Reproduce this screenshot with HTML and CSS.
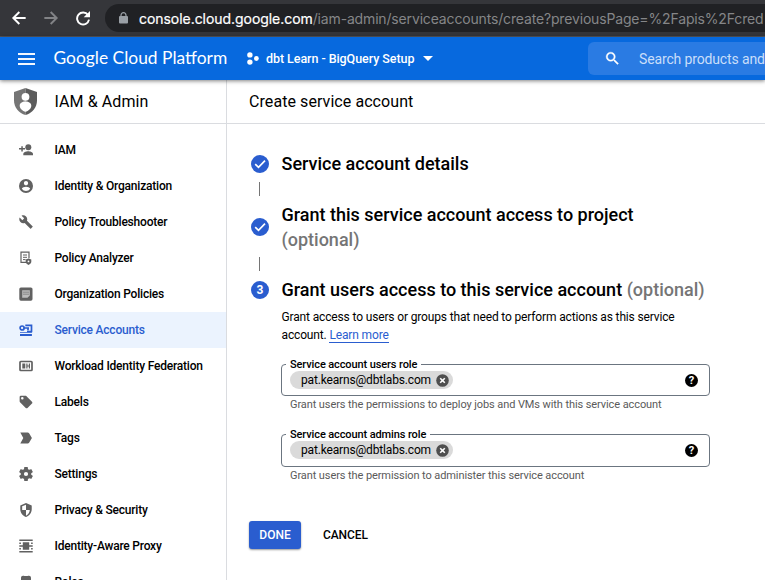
FILE: index.html
```html
<!DOCTYPE html>
<html lang="en">
<head>
<meta charset="utf-8">
<title>Create service account</title>
<link rel="stylesheet" href="styles.css">
</head>
<body>
<div class="browser">
  <svg class="nav-btn" viewBox="0 0 24 24"><path d="M22 12H4M12.500 3 3.500 12l9 9"/></svg>
  <svg class="nav-btn dim" viewBox="0 0 24 24"><path d="M2 12H20M11.500 3l9 9-9 9"/></svg>
  <svg class="nav-btn reload" viewBox="0 0 24 24"><path d="M19.500 7.500A9 9 0 1 0 21 14.500"/><path class="solid" d="M22.500 1.500v9.500H13z"/></svg>
  <div class="omnibox">
    <svg class="lock" viewBox="0 0 9 12"><rect x="0" y="4" width="9" height="7.500" rx="1"/><path d="M2 5V3.200a2.500 2.500 0 0 1 5 0V5"/></svg>
    <span class="url"><span class="host">console.cloud.google.com</span><span class="path">/iam-admin/serviceaccounts/create?previousPage=%2Fapis%2Fcred</span></span>
  </div>
</div>
<header class="topbar">
  <div class="burger"><i></i><i></i><i></i></div>
  <div class="logo"><span class="logo-g">Google</span> <span class="logo-c">Cloud Platform</span></div>
  <div class="project">
    <svg class="dots" viewBox="0 0 12 13"><circle cx="2.900" cy="2.900" r="2.700"/><circle cx="2.900" cy="10.100" r="2.700"/><circle cx="9.400" cy="6.500" r="2.400"/></svg>
    <span class="project-name">dbt Learn - BigQuery Setup</span>
    <i class="caret"></i>
  </div>
  <div class="search">
    <svg viewBox="0 0 24 24"><path d="M15.500 14h-.79l-.28-.27A6.470 6.470 0 0 0 16 9.500 6.500 6.500 0 1 0 9.500 16c1.610 0 3.090-.59 4.230-1.570l.27.28v.79l5 4.990L20.490 19zm-6 0C7.010 14 5 11.990 5 9.500S7.010 5 9.500 5 14 7.010 14 9.500 11.990 14 9.500 14"/></svg>
    <span>Search products and</span>
  </div>
</header>
<div class="body">
  <aside class="side">
    <div class="side-head">
      <svg class="shield" viewBox="0 0 23 27"><path fill="#757575" d="M11.500 0 0 4v8.500C0 19.500 5 25.200 11.500 27z"/><path fill="#5c5c5c" d="M11.500 0 23 4v8.500c0 7-5 12.700-11.500 14.500z"/><circle cx="11.500" cy="8.800" r="3.900" fill="#fff"/><path fill="#fff" d="M11.500 13.400c3.500 0 5.800 1.700 5.800 4.300 0 2.900-2.900 5.400-5.800 6-2.900-.6-5.800-3.100-5.800-6 0-2.600 2.300-4.300 5.800-4.300z"/></svg>
      <span class="t-side">IAM &amp; Admin</span>
    </div>
    <nav>
      <a class="item"><svg viewBox="0 0 14 14"><circle cx="9.300" cy="4.300" r="3"/><path d="M4.300 12.200v-1.300c0-1.900 3.200-2.700 4.900-2.700s4.800.8 4.800 2.700v1.300zM2.300 3.200h1.500v1.900H6v1.400H3.800v2.100H2.300V6.500H0V5.100h2.300z"/></svg><span>IAM</span></a>
      <a class="item"><svg viewBox="2 2 20 20"><path d="M12 2a10 10 0 1 0 0 20 10 10 0 0 0 0-20zm0 3c1.660 0 3 1.340 3 3s-1.340 3-3 3-3-1.340-3-3 1.340-3 3-3zm0 14.200a7.200 7.200 0 0 1-6-3.220c.03-1.990 4-3.080 6-3.080s5.970 1.090 6 3.080a7.200 7.200 0 0 1-6 3.220z"/></svg><span>Identity &amp; Organization</span></a>
      <a class="item"><svg viewBox="0.500 0.500 23 23"><path d="m22.700 19-9.100-9.100c.9-2.300.4-5-1.500-6.900-2-2-5-2.400-7.400-1.300L9 6 6 9 1.600 4.700C.4 7.100.9 10.100 2.900 12.100c1.900 1.900 4.600 2.400 6.900 1.500l9.100 9.100c.4.4 1 .4 1.400 0l2.300-2.300c.5-.4.5-1.100.1-1.400z"/></svg><span>Policy Troubleshooter</span></a>
      <a class="item"><svg viewBox="0 0 14 14"><path class="line" d="M7.500 11.400H2V1.200h8v6"/><path class="line thin" d="M4 4h4M4 6.300h4M4 8.600h2.500"/><path d="M9.500 7.500 12.300 8.500v2c0 1.700-1.100 2.800-2.800 3.400-1.700-.6-2.800-1.700-2.800-3.400v-2z"/><circle cx="9.500" cy="10.400" r=".9" fill="#fff"/></svg><span>Policy Analyzer</span></a>
      <a class="item"><svg viewBox="0 0 14 14"><rect x=".3" y=".5" width="13.200" height="13.200" rx="1.600"/><path fill="#bdbdbd" d="M3.200 3.300h7.600v5.200l-2.300 2.200H3.200z"/><path fill="#777" d="M4 4.800h6v.8H4zM4 6.800h6v.8H4z"/></svg><span>Organization Policies</span></a>
      <a class="item active"><svg viewBox="0 0 14 14"><circle class="line heavy" cx="3.100" cy="5" r="2"/><path class="line heavy" d="M5 5h5M9 5v2.200M6.300 2.300h6.200v6.200H8"/><path d="M1 9.200h11.900v.9H1zM1 11h11.900v1.900H1z"/></svg><span>Service Accounts</span></a>
      <a class="item"><svg viewBox="0 0 14 14"><rect class="line heavy" x="1" y="2.500" width="12" height="9" rx=".8"/><path d="M3.300 4.600h3v4.800h-3zM7.300 4.600h1.200v4.800H7.300zM8.500 6.400h1.600v1.200H8.500zM9.800 4.600H11v4.800H9.800z"/></svg><span>Workload Identity Federation</span></a>
      <a class="item"><svg viewBox="1 1 22 22"><path d="m21.400 11.600-9-9C12.100 2.200 11.600 2 11 2H4a2 2 0 0 0-2 2v7c0 .6.200 1.100.6 1.400l9 9c.4.4.9.600 1.400.6s1-.2 1.400-.6l7-7c.4-.4.6-.9.600-1.400s-.2-1-.6-1.400zM6.200 8.200a2 2 0 1 1 0-4 2 2 0 0 1 0 4z"/></svg><span>Labels</span></a>
      <a class="item"><svg viewBox="0 0 14 14"><path d="M1.300 1.600h7.400c.6 0 1 .2 1.400.7L12.900 7l-2.800 4.700c-.4.500-.8.700-1.400.7H1.300L4.300 7z"/></svg><span>Tags</span></a>
      <a class="item"><svg viewBox="2 2 20 20"><path d="M19.430 12.980c.04-.32.07-.64.07-.98s-.03-.66-.07-.98l2.110-1.650c.19-.15.24-.42.12-.64l-2-3.460c-.12-.22-.39-.3-.61-.22l-2.490 1c-.52-.4-1.080-.73-1.690-.98l-.38-2.650C14.460 2.180 14.250 2 14 2h-4c-.25 0-.46.18-.49.42l-.38 2.650c-.61.25-1.170.59-1.690.98l-2.490-1c-.23-.09-.49 0-.61.22l-2 3.460c-.13.220-.07.490.12.640l2.110 1.650c-.04.320-.07.650-.07.980s.03.660.07.980l-2.110 1.650c-.19.150-.24.420-.12.640l2 3.460c.12.220.39.300.61.220l2.490-1c.52.400 1.080.730 1.690.980l.38 2.650c.03.240.24.420.49.420h4c.25 0 .46-.18.49-.42l.38-2.650c.61-.25 1.170-.59 1.690-.98l2.490 1c.23.090.49 0 .61-.22l2-3.460c.12-.22.07-.49-.12-.64zM12 15a3 3 0 1 1 0-6 3 3 0 0 1 0 6z"/></svg><span>Settings</span></a>
      <a class="item"><svg viewBox="1 1 22 22"><path d="M12 1 3 5v6c0 5.550 3.840 10.740 9 12 5.160-1.260 9-6.450 9-12V5zm0 10.990h6c-.5 4.120-2.800 7.790-6 8.940V12H6V6.300l6-2.600z"/></svg><span>Privacy &amp; Security</span></a>
      <a class="item"><svg viewBox="0 0 14 14"><path d="M.3.500h13.400V2H.3zM.3 12h13.400v1.500H.3zM3.800 3.300h6.400v7.400H3.800zM.3 3.500h1.600V5H.3zM12.100 3.500h1.600V5h-1.600zM.3 9h1.600v1.500H.3zM12.100 9h1.600v1.500h-1.600zM.3 6.300h13.400v1.400H.3z"/></svg><span>Identity-Aware Proxy</span></a>
      <a class="item"><svg viewBox="0 0 14 14"><path d="M2 3c0-2.500 2-2.700 3.500-1.900h3C10 .3 12 .5 12 3v9H2z"/></svg><span>Roles</span></a>
    </nav>
  </aside>
  <main>
    <h1><span>Create service account</span></h1>
    <div class="content">
      <section class="step first">
        <svg class="badge" viewBox="0 0 18 18"><circle cx="9" cy="9" r="9"/><path d="M4.200 9.200 7.500 12.300 14 5.700"/></svg>
        <h2><span>Service account details</span></h2>
      </section>
      <i class="link-line"></i>
      <section class="step two">
        <svg class="badge" viewBox="0 0 18 18"><circle cx="9" cy="9" r="9"/><path d="M4.200 9.200 7.500 12.300 14 5.700"/></svg>
        <h2><span>Grant this service account access to project</span><br><em>(optional)</em></h2>
      </section>
      <i class="link-line lower"></i>
      <section class="step three">
        <span class="badge num">3</span>
        <h2><span>Grant users access to this service account</span> <em>(optional)</em></h2>
      </section>
      <div class="detail">
        <p class="desc"><span>Grant access to users or groups that need to perform actions as this service</span><br>account. <a>Learn more</a></p>
        <fieldset>
          <legend>Service account users role</legend>
          <div class="chip"><span>pat.kearns@dbtlabs.com</span><svg viewBox="0 0 13 13"><circle cx="6.500" cy="6.500" r="6.300"/><path d="m4.200 4.200 4.600 4.600m0-4.600L4.200 8.800"/></svg></div>
          <span class="help">?</span>
        </fieldset>
        <p class="hint"><span>Grant users the permissions to deploy jobs and VMs with this service account</span></p>
        <fieldset class="second">
          <legend>Service account admins role</legend>
          <div class="chip"><span>pat.kearns@dbtlabs.com</span><svg viewBox="0 0 13 13"><circle cx="6.500" cy="6.500" r="6.300"/><path d="m4.200 4.200 4.600 4.600m0-4.600L4.200 8.800"/></svg></div>
          <span class="help">?</span>
        </fieldset>
        <p class="hint"><span>Grant users the permission to administer this service account</span></p>
      </div>
      <div class="actions"><button class="primary">DONE</button><button>CANCEL</button></div>
    </div>
  </main>
</div>
</body>
</html>
```
FILE: styles.css
```css
* { box-sizing: border-box; }
html, body { height: 580px; overflow: hidden; }
body { margin: 0; width: 765px; background: #fff; color: #000; font-family: Roboto, sans-serif; font-size: 12px; display: flex; flex-direction: column; white-space: nowrap; }
h1, h2, p { margin: 0; }

.browser { flex: none; height: 37px; background: #35363a; border-bottom: 1px solid #55565a; display: flex; align-items: center; padding-left: 11px; }
.nav-btn { flex: none; width: 16px; height: 16px; margin-right: 16px; fill: none; stroke: #fff; stroke-width: 2.900; }
.nav-btn.dim { stroke: #828386; }
.nav-btn.reload { margin-right: 14px; }
.nav-btn .solid { fill: #fff; stroke: none; }
.omnibox { flex: 1; min-width: 0; height: 28px; background: #202124; border-radius: 14px 0 0 14px; display: flex; align-items: center; padding-left: 14px; overflow: hidden; }
.lock { flex: none; width: 9px; height: 12px; margin-right: 11px; fill: #9aa0a6; }
.lock path { fill: none; stroke: #9aa0a6; stroke-width: 1.200; }
.url { font-family: Inter, sans-serif; font-size: 14px; color: #858688; }
.host { color: #fff; letter-spacing: -.05px; -webkit-text-stroke: .2px #fff; }
.path { letter-spacing: -.16px; }

.topbar { flex: none; height: 43px; background: #0769de; color: #fff; display: flex; align-items: center; padding-left: 18px; box-shadow: 0 1px 4px rgba(0,0,0,.5); position: relative; }
.burger { width: 17px; display: flex; flex-direction: column; gap: 3px; margin-right: 18.500px; }
.burger i { height: 2px; background: #fff; opacity: .95; }
.logo { width: 193.500px; font-family: Lato, sans-serif; font-size: 17.400px; line-height: 20px; padding-bottom: 1px; }
.project { width: 341px; display: flex; align-items: center; }
.dots { width: 12px; height: 13px; fill: #fff; margin-right: 7px; }
.project-name { font-weight: 500; font-size: 12.500px; letter-spacing: -.06px; }
.caret { border: 5px solid transparent; border-top-color: #fff; border-bottom: 0; margin-left: 9px; }
.search { width: 177px; height: 33px; flex: none; border-radius: 6px 0 0 6px; background: #2a7be3; display: flex; align-items: center; padding-left: 16px; overflow: hidden; color: #c9defa; font-size: 14px; letter-spacing: -.14px; }
.search svg { width: 17px; height: 17px; flex: none; fill: #fff; margin-right: 18px; stroke: #fff; stroke-width: .5; }

.body { flex: 1; min-height: 0; display: flex; }
.side { width: 227px; flex: none; border-right: 1px solid #dadce0; overflow: hidden; }
.side-head { height: 44px; border-bottom: 1px solid #dadce0; display: flex; align-items: center; padding-left: 14px; font-size: 16px; margin-bottom: 8px; }
.shield { width: 23px; height: 27px; margin-right: 17.500px; }
.t-side { letter-spacing: .08px; }
.item { height: 36px; display: flex; align-items: center; padding-left: 19px; font-weight: 500; font-size: 12px; letter-spacing: -.21px; }
.item svg { width: 14px; height: 14px; flex: none; fill: #616161; stroke: none; margin-right: 21.500px; }
.item .line { fill: none; stroke: #616161; stroke-width: 1.200; }
.item .thin { stroke-width: 1; }
.item .heavy { stroke-width: 1.700; }
.item.active { background: #ebf3fe; color: #2a5dcf; }
.item.active svg { fill: #2a5dcf; }
.item.active .line { fill: none; stroke: #2a5dcf; }

main { flex: 1; min-width: 0; }
h1 { height: 44px; border-bottom: 1px solid #dadce0; font-size: 16px; font-weight: 400; line-height: 43px; padding-left: 22px; letter-spacing: .07px; }
.content { padding: 27px 0 0 24px; }
.step { display: flex; align-items: center; gap: 12.500px; }
.step h2 { font-size: 18px; font-weight: 500; line-height: 25px; }
em { font-style: normal; color: #757575; }
.badge { width: 18px; height: 18px; flex: none; fill: #2a5dcf; }
.badge path { fill: none; stroke: #fff; stroke-width: 1.700; }
.num { border-radius: 50%; background: #2a5dcf; color: #fff; font-size: 12px; font-weight: 700; line-height: 18px; text-align: center; }
.link-line { display: block; width: 1px; height: 14px; background: #757575; margin: 6px 0 6px 8px; }
.link-line.lower { margin: 5px 0 6px 8px; }
.detail { padding-left: 30px; width: 459px; }
.desc { line-height: 18px; margin-top: 6px; letter-spacing: -.145px; padding-left: .5px; }
.desc a { color: #2a5dcf; border-bottom: 1px solid #2a5dcf; }
fieldset { height: 38px; margin: 14px 0 0; padding: 0 11px 0 8px; border: 1px solid #6b7580; border-radius: 4px; display: flex; justify-content: space-between; min-width: 0; align-items: flex-start; }
fieldset.second { margin-top: 16px; height: 39px; }
legend { font-weight: 500; font-size: 11px; line-height: 13px; height: 13px; padding: 0 4px; margin-left: -4px; letter-spacing: -.11px; }
.chip { width: 163px; height: 18px; border-radius: 9px; background: #dadada; display: flex; align-items: center; padding-left: 11px; }
.chip span { width: 135px; font-size: 12px; letter-spacing: -.16px; }
.chip svg { width: 13px; height: 13px; fill: #4f4f4f; }
.chip path { stroke: #fff; stroke-width: 1.600; }
.help { width: 13px; height: 13px; margin-top: 3px; border-radius: 50%; background: #000; color: #fff; font-size: 11px; font-weight: 700; line-height: 13px; text-align: center; }
.hint { font-size: 11px; line-height: 14px; margin: 2px 0 0 9px; color: #5a5a5a; letter-spacing: -.09px; }
.actions { display: flex; gap: 22px; margin: 38px 0 0 -2px; }
button { border: 0; padding: 0; background: none; height: 28px; font: 500 12px/28px Roboto, sans-serif; letter-spacing: -.1px; }
.primary { width: 52px; border-radius: 3px; background: #2a5dcf; color: #fff; box-shadow: 0 1px 2px rgba(0,0,0,.4); letter-spacing: 0; }
```
